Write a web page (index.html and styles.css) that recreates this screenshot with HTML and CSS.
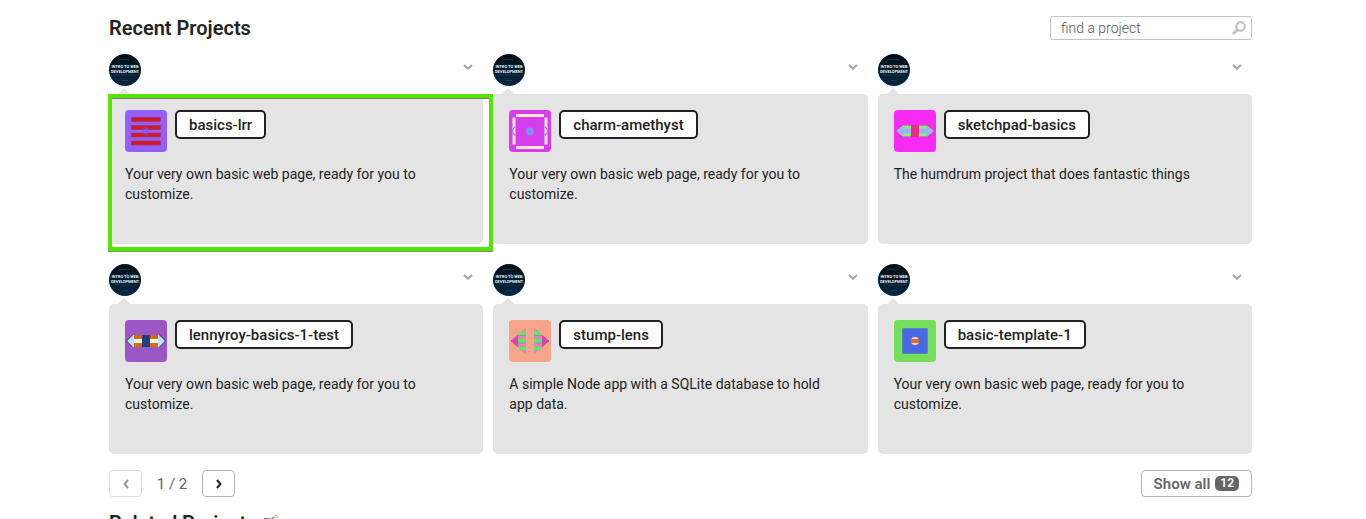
FILE: index.html
```html
<!DOCTYPE html>
<html lang="en">
<head>
<meta charset="utf-8">
<title>Recent Projects</title>
<link rel="stylesheet" href="styles.css">
</head>
<body>
<svg class="defs" aria-hidden="true">
  <defs>
    <linearGradient id="night" x1="0" y1="0" x2="0" y2="1"><stop offset="0" stop-color="#020d14"/><stop offset="1" stop-color="#052844"/></linearGradient>
    <symbol id="avatar" viewBox="0 0 64 64">
      <circle cx="32" cy="32" r="32" fill="url(#night)"/>
      <path d="M20 11h22M10 42h44M26 53h12" stroke="#2c4a5a" stroke-width="1.2"/>
      <text class="avatar-text" x="32" y="27" text-anchor="middle">INTRO TO WEB</text>
      <text class="avatar-text" x="32" y="37" text-anchor="middle">DEVELOPMENT</text>
    </symbol>
    <symbol id="chevron" viewBox="0 0 10 6"><path d="M1 1l4 3.6L9 1" fill="none" stroke="currentColor" stroke-width="2"/></symbol>
  </defs>
</svg>
<main class="page">
  <header class="section-head">
    <h1 class="title">Recent Projects</h1>
    <label class="search">
      <input class="search-input" type="search" placeholder="find a project" aria-label="find a project">
      <svg class="search-icon" viewBox="0 0 14 14" aria-hidden="true"><circle cx="8.500" cy="5.500" r="4.300" fill="none" stroke="currentColor" stroke-width="2.200"/><path d="M5.600 8.500L1 13" stroke="currentColor" stroke-width="2.600"/></svg>
    </label>
  </header>
  <ul class="projects">
    <li class="project">
      <div class="project-top">
        <svg class="avatar" role="img" aria-label="Intro to Web Development"><use href="#avatar"/></svg>
        <button class="menu" type="button" aria-label="Project options"><svg class="menu-icon"><use href="#chevron"/></svg></button>
      </div>
      <div class="card card-marked">
        <div class="card-head">
          <svg class="tile" viewBox="0 0 42 42" aria-hidden="true"><path fill="#955fff" d="M0 0h42v42H0z"/><path fill="#cf1c20" stroke="#a52856" stroke-width=".5" d="M6.500 7.500h29v4h-29zM6.500 15.500h29v4h-29zM6.500 23h29v4h-29zM6.500 31h29v4h-29z"/><path d="M17.500 19q3.500-4 7 0zM17.500 23.500q3.500 4 7 0z" fill="#8b3ed0" opacity=".75"/><circle cx="21" cy="21.300" r="2.500" fill="#8458ee"/></svg>
          <button class="name" type="button">basics-lrr</button>
        </div>
        <p class="description">Your very own basic web page, ready for you to customize.</p>
      </div>
    </li>
    <li class="project">
      <div class="project-top">
        <svg class="avatar" role="img" aria-label="Intro to Web Development"><use href="#avatar"/></svg>
        <button class="menu" type="button" aria-label="Project options"><svg class="menu-icon"><use href="#chevron"/></svg></button>
      </div>
      <div class="card">
        <div class="card-head">
          <svg class="tile" viewBox="0 0 42 42" aria-hidden="true"><path fill="#d63ded" d="M0 0h42v42H0z"/><path fill="#ffe8c8" d="M7 4h28v3H7zM7 36h28v3H7zM3.500 7.500h3v27h-3zM35.500 7.500h3v27h-3z"/><path d="M6.500 16.500q-6 4.500 0 9M35.500 16.500q6 4.500 0 9" fill="none" stroke="#8b83df" stroke-width="1.200"/><circle cx="21" cy="21.500" r="4" fill="#8590e8"/></svg>
          <button class="name" type="button">charm-amethyst</button>
        </div>
        <p class="description">Your very own basic web page, ready for you to customize.</p>
      </div>
    </li>
    <li class="project">
      <div class="project-top">
        <svg class="avatar" role="img" aria-label="Intro to Web Development"><use href="#avatar"/></svg>
        <button class="menu" type="button" aria-label="Project options"><svg class="menu-icon"><use href="#chevron"/></svg></button>
      </div>
      <div class="card">
        <div class="card-head">
          <svg class="tile" viewBox="0 0 42 42" aria-hidden="true"><path fill="#f82bf5" d="M0 0h42v42H0z"/><path fill="#f22b87" d="M2 21l5-6h28l5 6-5 6H7z"/><path fill="#83f073" d="M9 15h8v12H9zM25 15h8v12h-8z"/><path fill="#9fb4ef" d="M2 21l7-6v3.500h8v5H9V27zM40 21l-7-6v3.500h-8v5h8V27z"/><path d="M8 15.500h9M8 26.500h9M25 15.500h9M25 26.500h9" stroke="#a56bb5" stroke-width=".7"/></svg>
          <button class="name" type="button">sketchpad-basics</button>
        </div>
        <p class="description">The humdrum project that does fantastic things</p>
      </div>
    </li>
    <li class="project">
      <div class="project-top">
        <svg class="avatar" role="img" aria-label="Intro to Web Development"><use href="#avatar"/></svg>
        <button class="menu" type="button" aria-label="Project options"><svg class="menu-icon"><use href="#chevron"/></svg></button>
      </div>
      <div class="card">
        <div class="card-head">
          <svg class="tile" viewBox="0 0 42 42" aria-hidden="true"><path fill="#9b56c5" d="M0 0h42v42H0z"/><path fill="#203f80" d="M1 21l6-6h28l6 6-6 6H7z"/><path fill="#dc670c" d="M9 15h8v12H9zM25 15h8v12h-8z"/><path fill="#bfe1f6" d="M2 21l6-6h1v12H8zM40 21l-6-6h-1v12h1z"/><path fill="#e5fff0" d="M9 19h8v4H9zM25 19h8v4h-8z"/></svg>
          <button class="name" type="button">lennyroy-basics-1-test</button>
        </div>
        <p class="description">Your very own basic web page, ready for you to customize.</p>
      </div>
    </li>
    <li class="project">
      <div class="project-top">
        <svg class="avatar" role="img" aria-label="Intro to Web Development"><use href="#avatar"/></svg>
        <button class="menu" type="button" aria-label="Project options"><svg class="menu-icon"><use href="#chevron"/></svg></button>
      </div>
      <div class="card">
        <div class="card-head">
          <svg class="tile" viewBox="0 0 42 42" aria-hidden="true"><defs><clipPath id="arrows"><path d="M2 21L17 7.500v27zM40 21L25 7.500v27z"/></clipPath></defs><path fill="#f8a48b" d="M0 0h42v42H0z"/><g clip-path="url(#arrows)"><path fill="#e581bd" d="M2 7h38v28H2z"/><path fill="#42f565" d="M2 11.500h38v4H2zM2 19h38v4H2zM2 27h38v3H2z"/><path fill="#b58992" d="M2 15h38v1H2zM2 22.500h38v1H2z"/><path fill="#df40b5" d="M2 10h7v22H2zM33 10h7v22h-7z"/></g><path d="M2 20h1v2H2zM39 20h1v2h-1z" fill="#548c35"/></svg>
          <button class="name" type="button">stump-lens</button>
        </div>
        <p class="description">A simple Node app with a SQLite database to hold app data.</p>
      </div>
    </li>
    <li class="project">
      <div class="project-top">
        <svg class="avatar" role="img" aria-label="Intro to Web Development"><use href="#avatar"/></svg>
        <button class="menu" type="button" aria-label="Project options"><svg class="menu-icon"><use href="#chevron"/></svg></button>
      </div>
      <div class="card">
        <div class="card-head">
          <svg class="tile" viewBox="0 0 42 42" aria-hidden="true"><path fill="#75df5b" d="M0 0h42v42H0z"/><path fill="#4a68e5" stroke="#4d80be" stroke-width=".6" d="M8.500 8.500h25v25h-25z"/><circle cx="21" cy="21" r="4" fill="#f8d4b8"/><path fill="#e06b25" d="M17 19h8v4h-8z"/></svg>
          <button class="name" type="button">basic-template-1</button>
        </div>
        <p class="description">Your very own basic web page, ready for you to customize.</p>
      </div>
    </li>
  </ul>
  <div class="controls">
    <nav class="pager" aria-label="Pages">
      <button class="page-button" type="button" aria-label="Previous page" disabled><svg class="arrow" viewBox="0 0 6 10"><path d="M5 1L1.600 5 5 9" fill="none" stroke="currentColor" stroke-width="2"/></svg></button>
      <span class="page-count">1 / 2</span>
      <button class="page-button" type="button" aria-label="Next page"><svg class="arrow" viewBox="0 0 6 10"><path d="M1 1l3.400 4L1 9" fill="none" stroke="currentColor" stroke-width="2"/></svg></button>
    </nav>
    <button class="show-all" type="button">Show all <span class="count">12</span></button>
  </div>
  <h2 class="title related">Related Projects <svg class="flute" viewBox="0 0 16 16" aria-hidden="true"><path d="M1 4h5l1 1 5-3-5 8-5 3z" fill="#777b85"/><circle cx="13" cy="2.500" r="1.500" fill="#fff" stroke="#f3a070"/></svg></h2>
</main>
</body>
</html>
```
FILE: styles.css
```css
* { box-sizing: border-box; }
body {
  margin: 0;
  height: 100vh;
  overflow: hidden;
  background: #fff;
  color: #222;
  font: 15px/20px Roboto, "Liberation Sans", sans-serif;
}
button, input { font: inherit; color: inherit; }
.defs { position: absolute; width: 0; height: 0; }
.page { padding: 16px 114px 0 109px; }
.section-head { display: flex; justify-content: space-between; align-items: center; margin-bottom: 14px; }
.title { margin: 0; font-size: 20px; line-height: 24px; font-weight: 600; }
.search { display: flex; align-items: center; width: 202px; height: 24px; padding: 0 5px 0 10px; border: 1px solid #c3c3c3; border-radius: 3px; }
.search-input { flex: 1; min-width: 0; padding: 0; border: 0; outline: 0; background: none; font-size: 14px; font-weight: 300; appearance: none; }
.search-input::placeholder { color: #555; }
.search-icon { width: 14px; height: 14px; color: #c3c3c3; }
.projects { display: grid; grid-template-columns: repeat(3, 1fr); gap: 20px 10px; margin: 0; padding: 0; list-style: none; }
.project-top { display: flex; justify-content: space-between; align-items: flex-start; height: 40px; }
.avatar { width: 32px; height: 32px; }
.avatar-text { font: 700 8px Roboto, "Liberation Sans", sans-serif; fill: #e8eef0; }
.menu { display: flex; padding: 10px; border: 0; background: none; color: #a5a5a5; }
.menu-icon { width: 10px; height: 6px; }
.card { position: relative; min-height: 150px; padding: 16px; border-radius: 5px; background: #e4e4e4; }
.card::before { content: ""; position: absolute; left: 9px; top: -6px; border: 6px solid transparent; border-top: 0; border-bottom-color: #e4e4e4; }
.card-marked::after { content: ""; position: absolute; z-index: 1; inset: 0 -10px -7px -1px; border: 4px solid #54e600; box-shadow: inset 0 1px 0 #777, 0 1px 0 #71936b; pointer-events: none; }
.card-head { display: flex; align-items: flex-start; gap: 8px; }
.tile { width: 42px; height: 42px; border-radius: 4px; }
.name { height: 29px; padding: 0 12px; border: 2px solid #222; border-radius: 5px; background: #fff; font-weight: 500; }
.description { margin: 12px 0 0; padding-right: 16px; font-size: 14px; }
.controls { display: flex; justify-content: space-between; align-items: center; margin-top: 16px; }
.pager { display: flex; align-items: center; }
.page-button { display: flex; align-items: center; justify-content: center; width: 33px; height: 27px; padding: 0; border: 1px solid #b5b5b5; border-radius: 4px; background: #fff; color: #222; }
.page-button:disabled { border-color: #ddd; color: #999; }
.arrow { width: 6px; height: 10px; }
.page-count { width: 60px; text-align: center; color: #666; }
.show-all { display: flex; align-items: center; gap: 5px; height: 27px; padding: 0 12px; border: 1px solid #b5b5b5; border-radius: 4px; background: #fff; color: #666; font-weight: 600; }
.count { padding: 0 5px; border-radius: 5px; background: #666; color: #fff; font-size: 12px; line-height: 15px; }
.related { margin-top: 14px; }
.flute { width: 16px; height: 16px; margin-left: 2px; }
```
